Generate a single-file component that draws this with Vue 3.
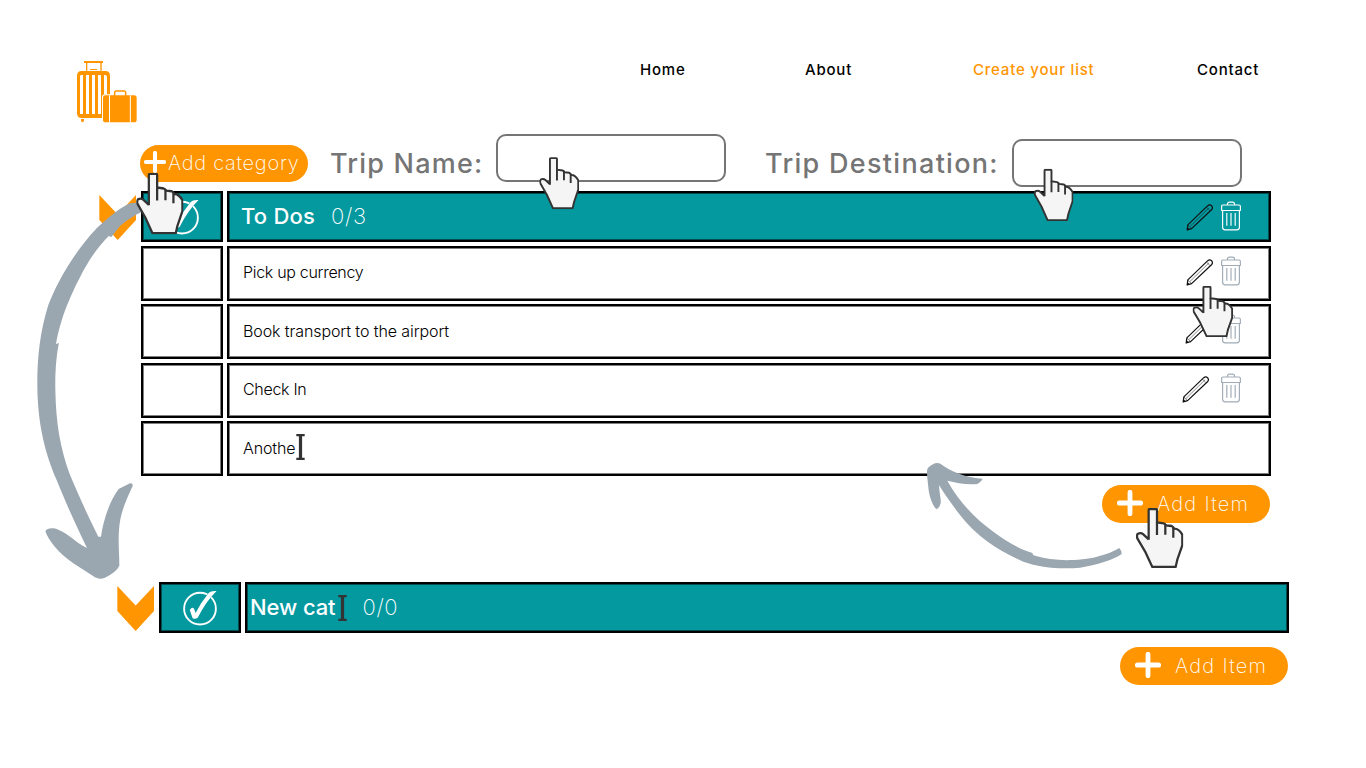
<script setup>
const links = [
  { label: 'Home', cls: 'home' },
  { label: 'About', cls: 'about' },
  { label: 'Create your list', cls: 'create' },
  { label: 'Contact', cls: 'contact' },
]

const items = [
  { text: 'Pick up currency', cls: 'r1', tools: true },
  { text: 'Book transport to the airport', cls: 'r2', tools: true },
  { text: 'Check In', cls: 'r3', tools: true },
  { text: 'Anothe', cls: 'r4', tools: false },
]

const hands = [
  { x: 136.2, y: 172.8, w: 47.2, h: 61.5 },
  { x: 539.3, y: 157.2, w: 39.8, h: 52 },
  { x: 1034, y: 168.8, w: 39.4, h: 52.2 },
  { x: 1192.6, y: 286, w: 40.4, h: 51 },
  { x: 1136, y: 508, w: 47.3, h: 60 },
]
</script>

<template>
  <div class="page">
    <svg class="defs" width="0" height="0" aria-hidden="true">
      <symbol id="hand" viewBox="0 0 142 180" preserveAspectRatio="none">
        <path d="M38 95V6Q38 3 41 3H60Q63 3 63 6V43L83 46Q88 47 90 52L107 54Q113 57 114 62Q128 61 139 80V112L124 155L119 177H49L27 130L4 91Q1 81 6 77Q15 73 22 79L38 94" fill="#f5f5f5" stroke="#333" stroke-width="6.8" stroke-linejoin="round" />
        <path d="M63 42V81M88 48V80M112 58V89" fill="none" stroke="#333" stroke-width="6.8" />
      </symbol>
      <symbol id="pencil" viewBox="0 0 79 80">
        <path d="M3 77L5 62L64 5Q70 0 76 6Q80 12 75 17L16 73Z" class="pencil-body" stroke="#111" stroke-width="3.6" stroke-linejoin="round" />
        <path d="M11 67L68 11M5 62Q9 67 16 73M60 9L71 20" fill="none" stroke="#111" stroke-width="1.5" />
        <path d="M2 78L4 69L11 75Z" fill="#111" />
      </symbol>
      <symbol id="trash" viewBox="0 0 62 90">
        <g fill="none" stroke="currentColor" stroke-width="3.6" stroke-linejoin="round">
          <path d="M20 11V8Q20 2 27 2H35Q42 2 42 8V11" />
          <path d="M2 28V15Q2 11 6 11H56Q60 11 60 15V28Z" />
          <path d="M5 28V80Q5 88 13 88H49Q57 88 57 80V28" />
          <path d="M18 36V75M31 36V75M44 36V75" />
        </g>
      </symbol>
      <symbol id="check" viewBox="0 0 106 110">
        <circle cx="51.5" cy="57" r="48.5" fill="none" stroke="#fff" stroke-width="5.8" />
        <path d="M20 61Q29 49 34 59L38 70Q54 38 78 9Q84 2 102 3Q68 37 45 84Q37 90 29 86Z" fill="#fff" stroke="#04989f" stroke-width="2" paint-order="stroke" />
      </symbol>
      <symbol id="plus" viewBox="0 0 26 26">
        <path d="M13 2.3V23.7M2.3 13H23.7" stroke="#fff" stroke-width="4.8" stroke-linecap="round" />
      </symbol>
      <symbol id="ibeam" viewBox="0 0 28 78" preserveAspectRatio="none">
        <path d="M1 3H27M1 75H27" stroke="#333" stroke-width="7" />
        <path d="M14 3V75" stroke="#333" stroke-width="10" />
      </symbol>
      <symbol id="chevron" viewBox="0 0 109 133" preserveAspectRatio="none">
        <path d="M1 0L55 58L109 0V74L55 133L1 74Z" fill="#ff9500" />
      </symbol>
    </svg>

    <header class="top">
      <svg class="logo" viewBox="0 0 180 186">
        <g fill="#ff9500">
          <path d="M21 0H78V6H21ZM27 6H31V29H27ZM70 6H74V29H70ZM39 24H60V27H39Z" />
          <path d="M14 30H85Q99 30 99 45V171H14Q0 171 0 156V45Q0 30 14 30Z" />
          <path d="M12 174H21V181Q16 186 12 181Z" />
        </g>
        <path d="M9 46Q9 42 14 42H18V159H9ZM27 42H36V159H27ZM45 42H54V159H45ZM63 42H69Q72 42 72 46V159H63ZM81 42H84Q90 42 90 48V100H81Z" fill="#fff" />
        <rect x="75" y="100" width="108" height="90" rx="10" fill="#fff" />
        <path d="M113 105V94Q113 90 117 90H141Q146 90 146 94V105" fill="none" stroke="#ff9500" stroke-width="4.5" />
        <rect x="78" y="103" width="101" height="81" rx="8" fill="#ff9500" />
        <path d="M97.5 103V184M160 103V184" stroke="#fff" stroke-width="3" />
      </svg>
      <nav class="nav">
        <a v-for="l in links" :key="l.label" :class="l.cls">{{ l.label }}</a>
      </nav>
    </header>

    <section class="form">
      <button class="pill pill-cat">
        <svg class="plus-s"><use href="#plus" /></svg><span>Add category</span>
      </button>
      <label class="lab-name">Trip Name:</label>
      <div class="field"></div>
      <label class="lab-dest">Trip Destination:</label>
      <div class="field field-dest"></div>
    </section>

    <section class="category">
      <svg class="chev"><use href="#chevron" /></svg>
      <div class="table">
        <div class="row head">
          <div class="cell box teal"><svg class="check"><use href="#check" /></svg></div>
          <div class="cell bar teal">
            <span class="title">To Dos</span><span class="count">0/3</span>
            <div class="tools">
              <svg class="pencil"><use href="#pencil" /></svg>
              <svg class="trash"><use href="#trash" /></svg>
            </div>
          </div>
        </div>
        <div v-for="i in items" :key="i.text" class="row" :class="i.cls">
          <div class="cell box"></div>
          <div class="cell bar">
            <span class="item">{{ i.text }}</span>
            <svg v-if="!i.tools" class="ibeam"><use href="#ibeam" /></svg>
            <div v-else class="tools">
              <svg class="pencil"><use href="#pencil" /></svg>
              <svg class="trash"><use href="#trash" /></svg>
            </div>
          </div>
        </div>
        <button class="pill pill-item">
          <svg class="plus-l"><use href="#plus" /></svg><span>Add Item</span>
        </button>
      </div>
    </section>

    <section class="category second">
      <svg class="chev"><use href="#chevron" /></svg>
      <div class="table">
        <div class="row head">
          <div class="cell box teal"><svg class="check"><use href="#check" /></svg></div>
          <div class="cell bar teal">
            <span class="title">New cat</span>
            <svg class="ibeam"><use href="#ibeam" /></svg>
            <span class="count">0/0</span>
          </div>
        </div>
        <button class="pill pill-item">
          <svg class="plus-l"><use href="#plus" /></svg><span>Add Item</span>
        </button>
      </div>
    </section>

    <svg class="overlay" viewBox="0 0 1366 768">
      <g fill="#9aa6b0">
        <path transform="translate(20 190) scale(.33333)" d="M330 40C290 58 260 88 230 115C155 195 108 285 85 345C60 425 52 500 52 580C52 700 75 790 110 870C140 945 170 1010 201 1074C170 1060 145 1030 115 1019C95 1011 80 1016 76 1024C85 1050 115 1090 160 1120L225 1162Q240 1170 255 1163Q290 1145 298 1127C298 1090 294 1060 297 1020C300 970 318 930 338 888Q339 878 330 880L296 897C270 930 250 990 243 1040L235 1040C200 970 173 910 148 850C120 770 108 700 106 600C105 540 110 490 117 459L108 462C115 420 130 370 150 325C165 290 185 250 200 225C220 190 245 160 266 138L274 141L300 108C320 90 345 75 365 66L355 38Z" />
        <path transform="translate(900 450) scale(.33333)" d="M81 62Q82 50 105 40Q115 37 122 42C150 62 190 82 247 86Q249 91 232 102C200 106 170 98 142 92C180 160 230 210 280 245C315 270 350 295 397 309L400 316C440 328 480 332 520 330C560 328 590 322 598 318C620 313 640 305 658 294Q664 300 665 312C640 330 590 345 540 353C480 358 420 353 370 335C300 305 230 260 180 195C155 162 135 135 117 105C118 130 124 150 122 160Q120 172 110 178C95 165 86 130 85 110C83 90 81 80 81 62Z" />
      </g>
      <use v-for="(h, n) in hands" :key="n" href="#hand" :x="h.x" :y="h.y" :width="h.w" :height="h.h" />
    </svg>
  </div>
</template>

<style>
body { margin: 0; background: #fff; }
</style>

<style scoped>
.page {
  position: relative;
  width: 1366px;
  height: 768px;
  overflow: hidden;
  background: #fff;
  font-family: Inter, "Liberation Sans", sans-serif;
  color: #000;
}
.defs { position: absolute; }
svg { display: block; flex: none; }
.overlay { position: absolute; left: 0; top: 0; width: 1366px; height: 768px; pointer-events: none; }

.top { display: flex; height: 134px; box-sizing: border-box; padding: 61px 0 0 77px; }
.logo { width: 60px; height: 62px; }
.nav { display: flex; padding-left: 503px; font-size: 15px; line-height: 18px; font-weight: 500; letter-spacing: .8px; white-space: nowrap; }
.home { width: 165px; }
.about { width: 168px; }
.create { width: 224px; color: #ff9500; }

.form { display: flex; height: 57px; padding-left: 140px; align-items: flex-start; }
.pill {
  display: flex;
  align-items: center;
  box-sizing: border-box;
  width: 168px;
  height: 37px;
  padding: 0;
  border: 0;
  border-radius: 19px;
  background: #ff9500;
  color: #fff;
  font-family: inherit;
  font-size: 20px;
  font-weight: 250;
  letter-spacing: .75px;
  white-space: nowrap;
}
.pill-cat { margin-top: 11px; padding-left: 4px; }
.pill-cat span { margin-top: -2px; }
.plus-s { width: 22px; height: 22px; margin: -3px 2px 0 0; }
.plus-l { width: 26px; height: 26px; margin-right: 14px; margin-top: -2px; }
.pill-item { height: 38px; margin: 9px 1px 0 auto; padding-left: 15px; letter-spacing: 1.3px; }
label { margin-top: 13px; font-size: 27px; line-height: 34px; font-weight: 500; letter-spacing: 1.2px; color: #757575; white-space: nowrap; }
.lab-name { width: 166px; margin-left: 22px; }
.lab-dest { width: 247px; margin-left: 39px; letter-spacing: 1.3px; }
.field { box-sizing: border-box; width: 230px; height: 48px; border: 2px solid #757575; border-radius: 10px; }
.field-dest { margin-top: 5px; }

.category { display: flex; width: 1172px; margin-left: 99px; }
.second { margin: 59px 0 0 117px; }
.chev { width: 37px; height: 45px; margin: 4px 5px 0 0; }
.table { width: 1130px; }
.row { display: flex; gap: 4px; height: 55px; margin-bottom: 3.4px; }
.row.head { height: 51px; margin-bottom: 4px; }
.row.r4 { margin-bottom: 0; }
.cell { position: relative; display: flex; align-items: center; box-sizing: border-box; border: 2px solid #000; box-shadow: inset 0 0 0 1px rgba(0, 0, 0, .5); }
.box { width: 82px; justify-content: center; }
.bar { flex: 1; padding: 0 28px 0 14px; }
.teal { background: #04989f; }
.check { width: 35px; height: 36px; margin: 1px 0 0 0; }
.title { color: #fff; font-size: 22px; font-weight: 550; letter-spacing: .2px; margin-top: -2px; }
.head .bar { padding-left: 12px; }
.count { margin: -2px 0 0 16px; color: #fff; font-size: 22px; font-weight: 250; letter-spacing: .6px; }
.item { font-size: 16px; font-weight: 300; letter-spacing: -.3px; margin-top: -3px; }
.r2 .item { letter-spacing: -.09px; margin-top: -1px; }
.r4 .item { letter-spacing: -.1px; margin-top: -1px; }
.ibeam { width: 9px; height: 26px; }
.r4 .ibeam { margin: -3px 0 0 0; }
.second .title { letter-spacing: -.1px; }
.second .ibeam { margin-left: 2px; }
.second .head .bar { padding-left: 3px; }
.second .pill-item { margin-top: 14px; }
.tools { display: flex; gap: 8px; margin-left: auto; color: #a0abb6; }
.head .tools { color: #fff; margin-bottom: 1px; }
.row:not(.head) .tools { margin-bottom: 5px; }
.pencil { width: 27px; height: 27px; margin-top: 3px; fill: #fff; }
.head .pencil { fill: #04989f; }
.r2 .tools { gap: 9px; }
.r3 .tools { gap: 12px; }
.trash { width: 20px; height: 30px; }
</style>
